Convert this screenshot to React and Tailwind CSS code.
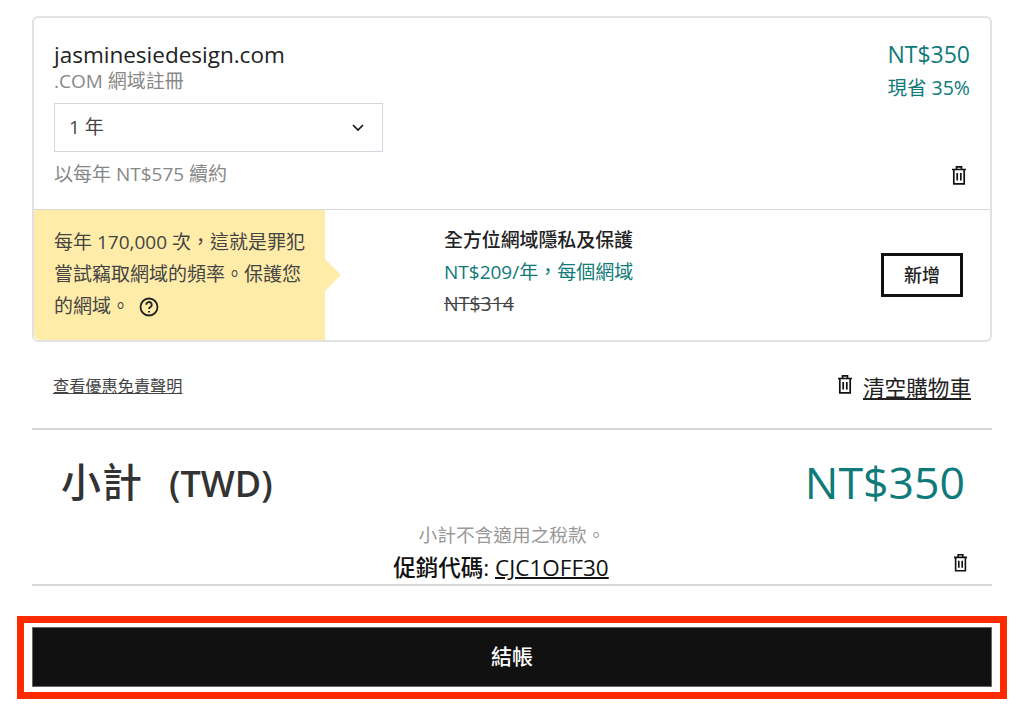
function Trash({ className }) {
  return (
    <svg viewBox="0 0 16 20" fill="none" stroke="#111" strokeWidth="1.7" className={className}>
      <path d="M1 4.5h14M5.5 4.5V1.8h5v2.7M2.8 4.5V18.8h10.4V4.5M6.2 8v7.5M9.8 8v7.5" />
    </svg>
  );
}

export default function App() {
  return (
    <div lang="zh-Hant-TW" className="w-[1024px] h-[721px] overflow-hidden bg-white pt-4 flex flex-col font-['Open_Sans','Noto_Sans_CJK_TC',sans-serif]">
      <div className="mx-8 h-[326px] border-2 border-[#e2e2e2] rounded-md flex flex-col">
        <div className="h-[192px] border-b border-[#d8d8d8] pl-5 pr-5 pt-[21px] flex justify-between">
          <div className="flex flex-col">
            <div className="text-[22.5px] leading-[32px] text-[#222]">jasminesiedesign.com</div>
            <div className="text-[19px] leading-[24px] text-[#888] -mt-[2px]">.COM 網域註冊</div>
            <div className="mt-[10px] w-[329px] h-[49px] border border-[#cfd8de] flex items-center justify-between pl-[14px] pr-[18px] text-[19px] text-[#444]">
              <span>1 年</span>
              <svg viewBox="0 0 12 8" fill="none" stroke="#111" strokeWidth="1.6" className="w-3 h-2">
                <path d="M1 1l5 5 5-5" />
              </svg>
            </div>
            <div className="mt-[9px] text-[19px] leading-[26px] text-[#888]">以每年 NT$575 續約</div>
          </div>
          <div className="flex flex-col items-end -mt-[1px]">
            <div className="text-[23px] leading-[32px] text-[#0f7a7a]">NT$350</div>
            <div className="text-[19.5px] leading-[26px] text-[#0f7a7a] mt-[5px]">現省 35%</div>
            <Trash className="w-[16px] h-[20px] mt-[64px] mr-[3px]" />
          </div>
        </div>
        <div className="flex-1 flex items-stretch">
          <div className="relative w-[291px] bg-[#ffeca8] rounded-bl-md pl-5 pr-4 pt-[16px] text-[19px] leading-[32px] text-[#444]">
            每年 170,000 次，這就是罪犯嘗試竊取網域的頻率。保護您的網域。
            <svg viewBox="0 0 20 20" fill="none" stroke="#222" strokeWidth="1.8" className="inline w-5 h-5 ml-[9px] align-[-4px]">
              <circle cx="10" cy="10" r="8.5" />
              <path d="M7.3 7.8a2.7 2.7 0 1 1 4 2.3c-.9.5-1.3 1-1.3 2" />
              <path d="M10 14v1.4" />
            </svg>
            <span className="absolute top-1/2 -translate-y-1/2 -right-4 border-y-[16px] border-l-[16px] border-y-transparent border-l-[#ffeca8]" />
          </div>
          <div className="flex-1 pl-[119px] pt-[14px]">
            <div className="text-[18.9px] leading-[32px] font-medium text-[#222]">全方位網域隱私及保護</div>
            <div className="text-[19px] leading-[32px] text-[#0f7a7a]">NT$209/年，每個網域</div>
            <div className="text-[19.5px] leading-[32px] text-[#444] line-through">NT$314</div>
          </div>
          <div className="flex items-center pr-[27px]">
            <div className="w-[82px] h-[44px] border-[3px] border-[#111] flex items-center justify-center text-[18px] font-medium text-[#222]">新增</div>
          </div>
        </div>
      </div>

      <div className="mx-8 h-[88px] border-b-2 border-[#d8d8d8] pl-[21px] pr-[21px] flex justify-between items-start pt-[32px]">
        <a className="text-[16.2px] leading-[24px] text-[#444] underline">查看優惠免責聲明</a>
        <div className="flex items-start gap-[10px] -mt-[1px]">
          <Trash className="w-[16px] h-[20px] mt-[1px]" />
          <a className="text-[21.6px] leading-[30px] text-[#222] underline">清空購物車</a>
        </div>
      </div>

      <div className="mx-8 h-[156px] border-b-2 border-[#d8d8d8] flex flex-col">
        <div className="flex justify-between items-center pl-[29px] pr-[27px] pt-[18px] h-[86px]">
          <div className="flex items-center text-[#333]">
            <span className="text-[40px] leading-[50px] font-medium tracking-[1px]">小計</span>
            <span className="text-[36px] leading-[50px] font-semibold ml-[26px] mt-[3px]">(TWD)</span>
          </div>
          <div className="text-[44.6px] leading-[60px] text-[#0f7a7a]">NT$350</div>
        </div>
        <div className="text-center text-[18.7px] leading-[24px] text-[#999] mt-[7px]">小計不含適用之稅款。</div>
        <div className="relative flex justify-center text-[22.5px] leading-[32px] text-[#111] mt-[5px] font-medium pr-[22px]">
          <span>促銷代碼: <span className="underline decoration-2">CJC1OFF30</span></span>
          <Trash className="absolute right-6 top-[1px] w-[15px] h-[19px]" />
        </div>
      </div>

      <div className="mt-[30px] mx-[17px] h-[83px] border-[7px] border-[#ff2a00] px-2 py-1">
        <div className="h-[60px] bg-[#111] border border-[#666] flex items-center justify-center text-white text-[21px] font-medium">結帳</div>
      </div>
    </div>
  );
}
